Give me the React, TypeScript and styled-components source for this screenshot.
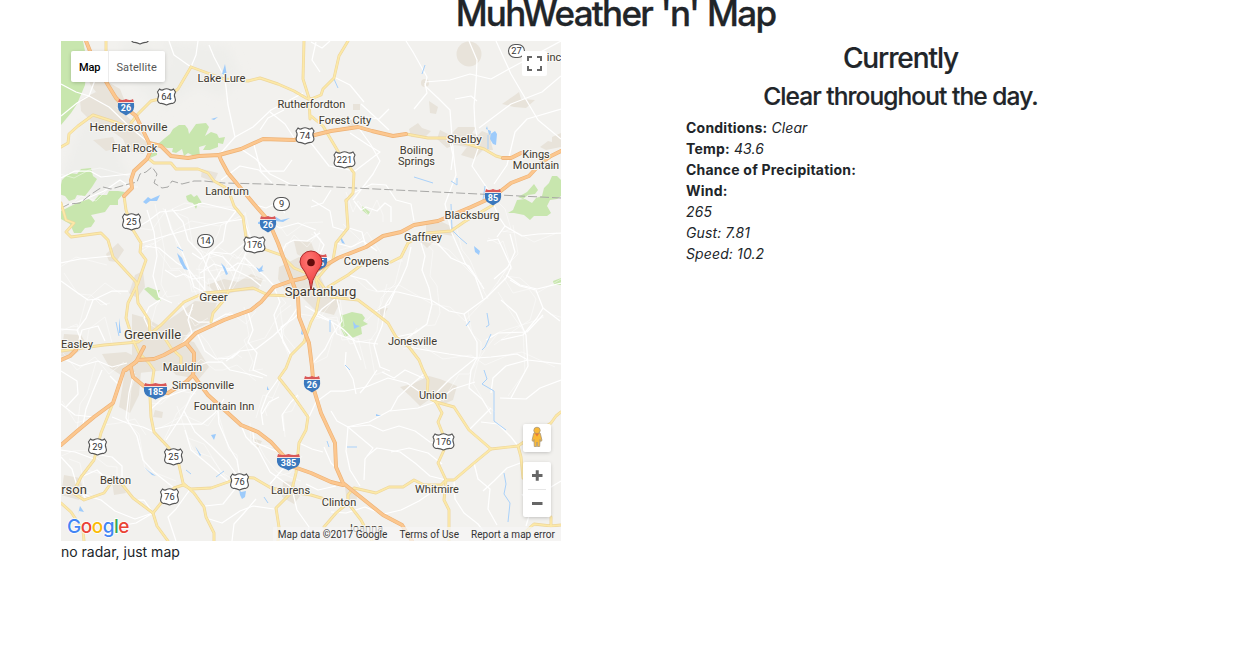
import React from "react";
import styled, { createGlobalStyle } from "styled-components";

const GlobalStyle = createGlobalStyle`
  html { font-size: 14px; }
  *, *::before, *::after { box-sizing: border-box; }
  body {
    margin: 0;
    overflow: hidden;
    background: #fff;
    color: #212529;
    font-family: Inter, "Liberation Sans", sans-serif;
    font-size: 1rem;
    line-height: 1.5;
  }
`;

const Page = styled.main`
  width: 1245px;
  height: 663px;
  overflow: hidden;
`;

const Title = styled.h1`
  margin: -8px 0 7px;
  padding-right: 14px;
  font-size: 35px;
  font-weight: 500;
  line-height: 42px;
  letter-spacing: -1.7px;
  word-spacing: 1px;
  text-align: center;
  white-space: nowrap;
  -webkit-text-stroke: 0.3px #212529;
`;

const Columns = styled.div`
  display: grid;
  grid-template-columns: 500px 429px;
  column-gap: 125px;
  padding-left: 61px;
`;

const MapFrame = styled.div`
  position: relative;
  width: 500px;
  height: 500px;
  overflow: hidden;
  font-family: Roboto, sans-serif;
`;

const MapArt = styled.svg`
  display: block;
  width: 500px;
  height: 500px;
  font-family: Roboto, sans-serif;
`;

const Control = styled.div`
  position: absolute;
  display: flex;
  background: #fff;
  border-radius: 2px;
  box-shadow: 0 1px 4px -1px rgba(0, 0, 0, 0.3);
`;

const TypeControl = styled(Control)`
  top: 10px;
  left: 10px;
  width: 94px;
  height: 31px;
`;

const TypeButton = styled.button<{ $active?: boolean }>`
  padding: 2px 8px 0;
  border: 0;
  border-left: ${(p) => (p.$active ? "0" : "1px solid #ececec")};
  background: transparent;
  color: ${(p) => (p.$active ? "#000" : "#565656")};
  font: ${(p) => (p.$active ? 500 : 400)} 11px Roboto, sans-serif;
  letter-spacing: ${(p) => (p.$active ? "-0.1px" : "0.12px")};

  & + & { padding: 2px 7px 0; }
`;

const FullscreenControl = styled(Control)`
  top: 10px;
  right: 14px;
  width: 25px;
  height: 25px;
  box-shadow: none;
`;

const PegmanControl = styled(Control)`
  top: 383px;
  right: 10px;
  width: 28px;
  height: 28px;
`;

const ZoomControl = styled(Control)`
  top: 421px;
  right: 10px;
  width: 28px;
  height: 55px;
`;

const MapFooter = styled.div`
  position: absolute;
  right: 0;
  bottom: 0;
  display: flex;
  gap: 12px;
  height: 14px;
  padding: 0 6px 0 5px;
  background: rgba(245, 245, 245, 0.72);
  color: #333;
  font-size: 10px;
  line-height: 15px;
  white-space: nowrap;
`;

const FooterItem = styled.span`
  letter-spacing: 0.03px;
`;

const Caption = styled.p`
  margin: 0;
`;

const Weather = styled.section`
  min-width: 0;
`;

const Heading = styled.h2<{ $small?: boolean }>`
  margin: 0 0 ${(p) => (p.$small ? "6px" : "7px")};
  font-size: ${(p) => (p.$small ? "24.5px" : "28px")};
  line-height: ${(p) => (p.$small ? "29px" : "34px")};
  font-weight: 500;
  letter-spacing: ${(p) => (p.$small ? "-0.93px" : "-1.1px")};
  text-align: center;
  white-space: nowrap;
  -webkit-text-stroke: 0.2px #212529;
`;

const Reading = styled.div`
  height: 21px;
  line-height: 21px;
  white-space: nowrap;
`;

const Name = styled.strong`
  font-weight: 700;
  letter-spacing: 0.22px;
`;

const Value = styled.em`
  letter-spacing: 0.12px;
`;

const highways = [
  "86,41 92,56 108,85 116,98 126,108 136,116 149,143 161,146 171,156 188,158 199,156 219,155 221,160 228,173 254,204 268,220 278,243 291,278 298,297 299,317 309,343 312,367 314,390 321,413 335,443 336,467 343,483 383,515 402,525 412,541",
  "149,143 151,150 147,159 134,171 131,180 132,188 124,196",
  "219,155 241,149 263,139 294,140 331,131 358,127 372,131 393,136 406,134",
  "561,151 551,156 541,163 529,176 511,183 493,197 471,207 438,221 414,225 401,232 383,236 366,247 338,258 326,265 304,278 291,281 274,287 261,302 251,310 224,320 196,333 186,343 164,355 154,359 138,360 126,370",
  "144,347 136,362 124,370 113,403 94,417 76,432 61,445",
  "186,343 194,353 194,367 193,375 208,395 241,425 258,432 271,442 281,453 294,467 311,473 331,482 343,485",
  "131,368 133,377 151,392 168,393 186,382 193,375",
  "61,360 70,356 76,350",
  "503,158 511,158 521,153",
];

const roads = [
  "191,67 178,89 168,97 151,101 138,114 131,123",
  "191,67 224,79 248,81 260,78 278,84 294,91 306,98 311,99",
  "304,41 303,79 309,98 310,119",
  "348,41 339,56 334,78 323,89 321,95 311,99",
  "61,147 68,143 69,134 78,126 93,115 118,123 132,128",
  "106,41 106,80",
  "149,159 154,163 171,163 176,169 198,169 208,173 214,181 228,189 234,206 243,217 246,237 261,248 281,255 294,268 311,275",
  "124,196 126,210 133,230 141,243 140,252 146,260 138,283 128,303 126,318 133,340 139,353 149,363 154,370 150,397 151,417 154,432 169,448 179,465 183,483 194,493 204,507 206,517 214,533 214,541",
  "61,203 66,220 74,223 66,232 71,237 101,233 108,240 113,257 136,282 138,303 149,320 150,333",
  "61,351 82,348 104,345 138,342 151,333 161,325 184,302 204,293 228,291 253,288 268,295 294,296",
  "228,292 224,300 213,313 211,322",
  "164,337 171,348 181,357 181,368",
  "113,403 101,433 94,460 81,477 73,493 84,500 104,493 111,483 121,483 133,498 153,513 157,526 168,541",
  "61,503 71,512 83,530 84,541",
  "153,513 161,503 174,488 183,485 191,489 211,488 228,482 239,477 254,478 271,488 291,492 311,495 328,500 336,504",
  "304,342 291,355 286,368 279,378 294,397 308,417 306,430 299,443 296,473 291,493 276,508 279,527 278,541",
  "346,200 348,228 336,243 333,260 316,280 320,292 316,313 311,322 304,342",
  "311,116 323,126 339,153 354,173 353,193 346,201",
  "406,134 428,138 446,138 468,144 484,149 496,156 503,158",
  "493,205 464,222 451,231 426,233 408,243 401,257 391,262 364,263 348,275 328,287",
  "316,277 331,297 358,300 374,312 388,323 396,337 409,347 419,360 423,370 428,380 427,397 436,402 454,407 469,430 491,449 518,446 551,423 556,416 561,412",
  "436,402 442,413 438,422 444,437 444,450 438,463 446,480 444,500 449,510 449,541",
  "491,449 474,463 454,480 446,480 441,485 424,485 414,480 403,487 389,487 376,493 354,488 348,495 348,503 336,513 324,527",
  "348,503 361,520 372,541",
  "518,446 521,457 523,478",
  "551,517 551,526 534,524 524,533",
  "551,526 561,525",
];

const lanes = [
  "169,41 174,55 191,67", "198,41 196,55 191,67", "61,116 77,103 89,96 109,107 131,128 149,143",
  "61,84 76,92 89,96 95,80", "209,45 214,57 225,78 228,105 235,137 219,155", "235,137 253,127 271,110 303,93",
  "241,149 256,159 270,174 290,184 315,188", "254,145 261,171 284,171 292,160", "221,180 240,166 259,170 272,183",
  "270,112 285,124 294,138", "260,130 268,118 284,110", "311,143 329,166 355,171 380,152 368,145 350,133",
  "406,41 413,52 427,77 425,86 438,98 450,110 452,137 454,159 456,175 445,204 451,230",
  "469,41 477,60 476,82 474,106 475,126 479,146 472,166 485,185 493,197", "425,82 450,80 470,74 491,79 509,69 561,41",
  "449,137 453,155 451,170", "496,41 511,74 538,120 561,139", "561,76 542,92 511,104 479,128", "455,99 471,96 477,101",
  "494,184 507,165 515,132 527,119 561,109", "358,127 371,145 380,161 373,174 353,200",
  "353,193 372,184 386,185 396,200 411,204 414,221", "311,207 323,203 331,190", "312,200 330,211 333,227 346,231",
  "354,201 361,210 366,207 377,211 385,203 391,207 391,222", "61,178 75,171 90,171 101,177 130,174",
  "61,206 75,203 90,197 104,191 120,180 132,188", "61,263 80,259 111,256", "61,281 75,291 88,300 98,299 107,305",
  "77,330 86,318 93,300 112,291 128,291", "61,329 77,330 83,345", "79,340 82,330 98,326 105,341", "66,360 80,366 98,361 112,367 127,363",
  "133,230 148,221 160,212 181,210 202,203 236,211", "145,246 159,248 177,263 189,270 205,290", "141,243 165,236 190,229 218,223 244,219",
  "147,210 154,232 157,256 153,276 159,297 172,303", "165,209 171,229 181,249 187,264 194,287 206,293",
  "172,209 183,222 188,240 201,254 209,271 221,290", "236,211 226,224 223,241 210,253 204,270 205,293", "243,217 251,240 244,257 236,271 229,290",
  "244,257 254,267 265,276 274,286", "210,253 223,257 235,270 251,278 261,286", "192,253 201,259 211,252 231,254 245,243",
  "200,273 214,264 229,269 238,263 254,266", "165,270 176,277 184,274 193,279 205,277", "219,291 215,281 221,270 235,270",
  "281,255 286,244 294,240 307,241 320,233", "267,221 280,228 298,223 316,230", "314,232 324,245 319,256 333,260",
  "336,243 351,247 363,241 377,251", "366,247 362,232 349,228", "348,275 366,280 377,291 398,292 431,300 449,311 464,314 486,298 506,278 511,267 502,247 498,239 487,241",
  "421,243 425,256 422,270 429,288 432,304 427,324 415,333 396,337", "426,233 439,245 451,258 469,266 484,289", "451,231 457,245 465,263 475,276 483,299",
  "411,247 407,266 400,282 386,304 382,326 374,345 380,367 390,371", "401,257 386,265 371,263", "374,312 389,304 395,291", "393,341 407,338 418,330",
  "493,203 499,217 505,226 497,237", "505,226 522,236 538,234 561,233", "510,234 515,252 508,267 494,279",
  "510,280 520,286 536,290 543,308 537,318 523,335 501,340", "506,275 520,285 537,289 561,283", "543,308 560,321", "501,300 516,313 526,335 528,366 511,398",
  "464,314 468,326 477,342 477,358 471,370 469,388 482,399 491,414", "409,347 425,350 449,354 477,358 491,357 517,354 528,360 561,364",
  "486,340 498,333 527,332 543,315", "477,357 461,370 451,378 435,394", "311,322 322,309 335,299", "317,316 332,322 337,334 353,340 361,360",
  "305,306 324,317 343,329 355,341 378,344", "337,299 342,321 332,335 325,349 313,363", "299,306 287,323 273,336 256,349 240,351 226,361",
  "291,355 283,342 281,327 293,319 299,313", "274,287 280,302 274,315 278,331 291,355", "248,312 253,330 248,342 257,353 253,370 267,376",
  "198,335 205,351 216,359 232,358 239,352", "194,367 208,362 222,362 230,370 244,373 263,378", "181,345 192,333 188,320 193,304", "151,333 144,318 149,307 160,300",
  "181,302 187,315 198,322 211,322", "212,322 226,314 242,315 252,310", "102,370 93,391 86,409 83,425", "61,404 75,415 94,417",
  "61,457 72,469 77,486 86,499", "61,450 75,452 94,459", "81,477 97,470 111,483", "94,454 112,457 122,466 122,483",
  "134,372 129,393 126,418 137,436 143,460 154,472 174,488", "112,417 127,423 143,427 154,432", "151,409 162,399 177,393 197,386",
  "154,429 178,424 202,424 215,413 224,399", "166,440 181,417 191,397 199,386", "185,430 191,450 208,464 229,482",
  "184,411 195,432 211,446 228,463 239,478", "217,401 219,424 229,447 237,460 240,477", "241,425 246,437 258,449 270,472 294,489",
  "253,432 254,442 281,453", "279,378 267,395 261,411 263,425", "279,397 269,402 262,414", "284,431 282,415 291,402 298,395",
  "270,484 282,470 294,461", "205,506 223,504 239,484", "191,488 176,509 168,517 176,541", "153,513 144,500 135,500",
  "153,513 135,519 115,511 101,500 75,492", "153,513 136,523 119,526 106,535", "206,518 222,523 240,511 253,506 274,509",
  "293,493 297,510 309,527 306,541", "232,541 234,524 244,513 256,499", "309,417 316,402 331,391 345,391 366,387 388,378 407,383 423,394",
  "356,394 353,379 345,365 346,352", "347,427 369,422 391,410 398,397 411,385 424,374", "331,411 337,421 348,427 370,425 383,431 399,426 415,431 430,442 442,445",
  "348,427 346,451 350,470 360,486", "348,427 373,448 365,459 364,480", "390,411 418,408 441,400", "391,452 409,448 428,453 442,464",
  "446,480 430,476 415,463 400,452 377,448 367,456", "454,480 455,499 464,513 478,524 491,541", "474,463 478,479 490,489 488,509 497,525",
  "441,486 419,501 401,510 384,514", "331,512 346,513 365,507 382,514", "336,486 318,490 306,484", "324,447 331,463 336,468", "299,443 312,449 323,452",
  "469,430 484,415 491,408", "481,422 498,424 511,437 518,446", "523,462 507,468 494,481 483,491", "436,402 453,389 475,382", "491,393 493,378 506,366 528,360",
  "561,380 540,388 526,399 500,398", "561,481 551,487 542,499", "522,494 531,509 526,526", "423,378 405,370 394,378 382,372", "377,370 366,386 360,393",
  "316,42 312,60 320,72", "334,77 350,85 364,102", "361,104 374,116 389,130", "414,109 427,93 425,83", "389,109 379,119 365,117 345,119",
  "61,371 77,381 78,394 66,407", "110,376 119,385 114,403", "285,213 277,203 266,208 256,205", "311,42 322,48 330,41",
];

const fineLanes = lanes.slice(24, 105).map((line, i) =>
  line
    .split(" ")
    .map((point, k) => {
      const [x, y] = point.split(",").map(Number);
      return `${x + ((i * 7) % 17) - 8},${y + ((k * 11 + i * 5) % 19) - 9}`;
    })
    .join(" "),
);

const terrain = [
  "M120 41h26l20 28-11 29-19-11z",
  "M158 41l70 6 14 31-22 20-23-12-29 21-22-9 24-36z",
  "M83 118l24 8 23 54-34 15-35-16z",
];

const urban = [
  "M77 61l24 1 7 20 12 7 6 15-8 4-16-8-12-16-5-18z", "M80 100l16-8 16 12 19 16 18 24-6 10-15-3-5-12-14-10-14-4-14-14z",
  "M93 140l20-3 4 11-11 3zM202 169l16 4-4 9-13-5z", "M106 254l12-11 6 7-8 12-7-1zM135 275l8-4 2 16-8 11-8-5z",
  "M132 314l14 4 14 8 19-13 16-12 22 2-8 20-20 9-15 20-8 18-27 3-7-17z", "M207 285l17-6 14 3 13-8 12 5-5 11-23 2-15 4z",
  "M102 354l24-2 16 8-3 35-9 18-11-6 5-30-14-9z", "M152 352l24-14 18 4 15 25-10 12-23-4-11-12z", "M64 334l17 1 6 10-17 13-9-2z",
  "M294 241l17 1 5 13-6 7-13-8zM279 267l20-10 18 12 9 20 14 13-6 13-19-5-14-14-15-5-8-12z",
  "M437 139l3-9 10 5 8-8 18 0-4 6 6 2 4-4 12 5-3 6 2 8-10 0-9 9-13-4 6-8-12-2-8 3z", "M409 129l9-6 4 5 9 3-7 7-13-1z",
  "M426 221l8 3 8-2 13 6-2 8-11-2-15 14-8-8 7-6z",
  "M400 387l12-3 17-8 11 3 17 7-4 14-9 4-14-5-10 7-10-10z", "M353 104h7v6h-7zM345 120l11 0 1 5-8 2zM429 101l9 6-2 7-6-1z",
  "M502 104l13-9 4-3 2 7 14 1-9 8-12-1zM540 147l8-6 4 1v-5l9-4v14l-15 3z", "M283 481l10 1 7 14-6 8-12-7zM345 487l11 1 1 11-10 5z",
  "M64 475l16 3 4 14-5 8-18-5zM111 475l11 7 4 11-12 2zM252 438l10 3-4 7zM155 410l8 2-1 6-9-1z", "M376 309l12-1-5 9z",
];

const parks = [
  "M61 41h22l4 20-2 24-8 19-6 9-10 12z",
  "M158 144l7-6 5-4 3-5 6-4 6 0 3 4 1 5 7-10 10-1 3 4-4 9 6-4 6 2 2 4 6-1-2 7-5-1 0 4-8 3-7 0 3-5-7 2 1 9-5 3-3-4-4-2-4 3-2-7-6 4-4-1 1-4-6 0z",
  "M149 151l8 1 0 3-7 3z",
  "M62 180l7-7 8 1 4-5 10-1 2 8 4 3-5 8-7 9-8-1-2 4-6 2-4-5-6-2z", "M61 211l16-8 12-4 4 3 6-7 8 0 2-4 9 0 7 1-7 8 0 5-8 0-5 7-14 3 4 6-4 6-6 1-4 5-7 0-4-9-9-5-6 3z",
  "M186 196l5-2 3 3 3-2 5 8-4 0-2 6-3-6-4-1-2-2zM144 289l4-2 8 3 4 0-2 4 3 7-5-1z", "M340 314l3 1 9-3 10 2 3 4-2 3 5 3-7 3 1 7-10 4-3-3-4 2-4-8z",
  "M508 213l5-3 4-10 8-1 7 4 4-5 6-2 2-8 5-5 3-7 5 0 4 4v16l-4 3-7 1-3 6 4 7-4 3-13 0-4 4-6-5-10-2z", "M553 281l8-3v7h-7zM362 206l8 6-2 3-6-5z", "M534 184l4 6-3 4-7 1-5 4-5-2 9-5z",
];

const waters = [
  "M487 126l2 9 6-4 2 3-1 11-3-1-3-5 1-8-5-2z", "M145 200l3-3 3 2 9-4-3 6-7 0-4 3-3-2z", "M177 253l5 5 3 7 3 5-4-1-4-7z",
  "M221 263l4 4 3 7-2 1-2-5zM256 267l3 2 4-4-1 5 2 1-5 1z", "M258 222l9-2 9-3 5 3 9-2-7 4-8-1-4 3-13 0z",
  "M239 489l2 3 5-1-1 6-3 2-2-4z", "M80 506l4 6-5-1-1 3zM211 435l5-1-2 6z", "M144 467l6 5 6 4-4-1z",
  "M340 235l5 9-3-1-2-5zM353 321l3 4 4 1-6 3zM474 246l6 5-1 4-4-3zM225 64l2 12-5-2z",
  "M211 119l7-2-4 3zM195 446l6 9-1 1zM267 386l2 4-2 0zM376 414l5 2-5 0zM119 318l0 15 2 0z", "M302 328l1 7-2-1z",
];

const streams =
  "M451 204l1 26 8 8 7 6M457 178v7l-6-4M414 177l19 6M485 186l-2 14M488 135v14M425 65l-3 9M487 313l2 12-3 2M491 334l-6 13-3 3M466 326l4-5M484 370l3 9-5 5 12 7v30l12 9M504 473l2 11-2 10 6 9-2 19M347 447l10 0M183 251l-6-4M116 322l3 14M264 497l4 6M330 320v12M225 78l-7-2M484 535l3 4M327 441l2 6M186 470l5 4M224 471l-8 6M345 365l5 5M337 155l3 5M334 79l4 9";

const places: [string, number, number, number?][] = [
  ["Lake Lure", 221.5, 82, 11.2], ["Rutherfordton", 311.5, 108], ["Forest City", 345, 124], ["Shelby", 464.5, 142.5, 11.8], ["Boiling", 416.5, 154],
  ["Springs", 416.5, 165], ["Kings", 536, 158], ["Mountain", 536, 169], ["Hendersonville", 128.5, 131, 11.8], ["Flat Rock", 134.5, 152],
  ["Landrum", 227, 195], ["Blacksburg", 472, 219, 11.1], ["Gaffney", 423, 241], ["Cowpens", 366.5, 265], ["Spartanburg", 320.5, 296, 13],
  ["Greer", 213.5, 300.5, 11.8], ["Greenville", 152.5, 339, 13.1], ["Easley", 77, 348, 11.2], ["Mauldin", 182.5, 371], ["Simpsonville", 203, 389],
  ["Fountain Inn", 224, 410], ["Jonesville", 412.5, 345], ["Union", 433, 399], ["Whitmire", 437, 493], ["Clinton", 339, 506],
  ["Laurens", 290.5, 494], ["Belton", 115.5, 484], ["rson", 74, 494, 13], ["inc", 554, 61], ["Joanna", 365, 532],
];

const usRoutes: [string, number, number][] = [
  ["64", 166.5, 97], ["74", 305, 136], ["221", 344.5, 160], ["25", 131.5, 222], ["176", 254.5, 245], ["29", 97.5, 447], ["25", 173.5, 457], ["76", 169.5, 497], ["76", 239.5, 482], ["176", 443.5, 442], ["", 140, 36],
];

const interstates: [string, number, number][] = [
  ["26", 126, 107], ["26", 268, 224], ["85", 493, 197], ["85", 319, 262], ["26", 312, 384], ["185", 155.5, 391], ["385", 288.5, 462],
];

const stateRoutes: [string, number, number][] = [["27", 516.5, 51], ["9", 281.5, 204], ["14", 205.5, 241]];

function UsShield({ label, x, y }: { label: string; x: number; y: number }) {
  const w = label.length > 2 ? 10.5 : 9;
  return (
    <g transform={`translate(${x} ${y})`}>
      <path
        d={`M${-w + 2} -8 Q${-w / 2} -6 -3 -7.5 Q0 -9 3 -7.5 Q${w / 2} -6 ${w - 2} -8 L${w} -5 Q${w - 2} -2 ${w - 0.5} 1 Q${w + 1} 5 ${w - 3} 6.5 Q4 6 0 8 Q-4 6 ${-w + 3} 6.5 Q${-w - 1} 5 ${-w + 0.5} 1 Q${-w + 2} -2 ${-w} -5 Z`}
        fill="#fff" stroke="#555" strokeWidth="1.1"
      />
      <text y="3.3" textAnchor="middle" fontSize="9.3" fill="#333">{label}</text>
    </g>
  );
}

function Interstate({ label, x, y }: { label: string; x: number; y: number }) {
  const w = label.length > 2 ? 11.5 : 8;
  return (
    <g transform={`translate(${x} ${y})`}>
      <path d={`M${-w} -4 Q${-w - 1} 4 ${-w / 2} 6 Q-2 7 0 8.5 Q2 7 ${w / 2} 6 Q${w + 1} 4 ${w} -4Z`} fill="#3b78bd" />
      <path d={`M${-w + 1} -8 Q${-w / 2} -6 0 -8 Q${w / 2} -6 ${w - 1} -8 L${w} -4.5H${-w}Z`} fill="#d95858" />
      <path d={`M${-w} -4.5H${w}`} stroke="#fff" strokeWidth=".7" />
      <text y="3.8" textAnchor="middle" fontSize="9" fontWeight="700" fill="#fff">{label}</text>
    </g>
  );
}

function StateRoute({ label, x, y }: { label: string; x: number; y: number }) {
  return (
    <g transform={`translate(${x} ${y})`}>
      <rect x="-8" y="-6.5" width="16" height="13" rx="6.5" fill="#fff" stroke="#555" strokeWidth="1.1" />
      <text y="3.3" textAnchor="middle" fontSize="9.3" fill="#333">{label}</text>
    </g>
  );
}

function RegionMap() {
  return (
    <MapArt viewBox="61 41 500 500" role="img" aria-label="Map of Spartanburg">
      <defs>
        <radialGradient id="pin" cx=".4" cy=".25" r=".75">
          <stop stopColor="#ff7774" />
          <stop offset="1" stopColor="#ee3d3d" />
        </radialGradient>
        <filter id="relief"><feGaussianBlur stdDeviation="5" /></filter>
      </defs>
      <rect x="61" y="41" width="500" height="500" fill="#f2f1ee" />
      <g fill="#eeeeeb" filter="url(#relief)">{terrain.map((d) => <path key={d} d={d} />)}</g>
      <g fill="#e8e3da">{urban.map((d) => <path key={d} d={d} />)}<circle cx="469" cy="54" r="12.5" /><circle cx="425" cy="83" r="4" /></g>
      <g fill="#c8e6ae">{parks.map((d) => <path key={d} d={d} />)}</g>
      <g fill="none" stroke="#fff" strokeLinejoin="round">
        {fineLanes.map((p, i) => <polyline key={i} points={p} strokeWidth=".6" opacity=".75" />)}
        {lanes.map((p) => <polyline key={p} points={p} strokeWidth="1.25" />)}
      </g>
      <g fill="#9dcbfb">{waters.map((d) => <path key={d} d={d} />)}</g>
      <path d={streams} fill="none" stroke="#a9d1fa" strokeWidth="1" />
      <path d="M61 208l8-4 11-1 10-8 9-6 4-2 8 2 14-4 12-3 3-8 6-2 6-5 5 7-3 9 8 5 6-1 4-6 10 3 12-3 10 0 20 2 40 1 70 3 227 11" fill="none" stroke="#a8a8a6" strokeWidth="1" strokeDasharray="9 3" />
      <g fill="none" strokeLinejoin="round" strokeLinecap="round">
        {roads.map((p) => <polyline key={p} points={p} stroke="#eed69c" strokeWidth="2.9" />)}
        {roads.map((p) => <polyline key={p} points={p} stroke="#fce9a8" strokeWidth="1.7" />)}
        {highways.map((p) => <polyline key={p} points={p} stroke="#edb276" strokeWidth="3.9" />)}
        {highways.map((p) => <polyline key={p} points={p} stroke="#fcc78f" strokeWidth="2.6" />)}
      </g>
      {usRoutes.map(([label, x, y]) => <UsShield key={`${x}-${y}`} label={label} x={x} y={y} />)}
      {interstates.map(([label, x, y]) => <Interstate key={`${x}-${y}`} label={label} x={x} y={y} />)}
      {stateRoutes.map(([label, x, y]) => <StateRoute key={label} label={label} x={x} y={y} />)}
      <g fill="#40392f" stroke="#f8f7f4" strokeWidth="2.2" paintOrder="stroke" textAnchor="middle" strokeLinejoin="round">
        {places.map(([label, x, y, size = 11]) => <text key={label} x={x} y={y} fontSize={size}>{label}</text>)}
      </g>
      <path d="M311 290Q310.4 280 305 272Q300 266 300 262A11 11 0 1 1 322 262Q322 266 317 272Q311.6 280 311 290Z" fill="url(#pin)" stroke="#a82b2b" strokeWidth="1" />
      <circle cx="311" cy="262.5" r="3.8" fill="#630b0b" />
      <g fontSize="19" fontFamily="Inter, sans-serif" fontWeight="500" stroke="#fff" strokeWidth="1.4" paintOrder="stroke">
        <text x="67" y="533" textLength="62.5" lengthAdjust="spacing">
          <tspan fill="#4285f4">G</tspan><tspan fill="#ea4335">o</tspan><tspan fill="#fbbc05">o</tspan><tspan fill="#4285f4">g</tspan><tspan fill="#34a853">l</tspan><tspan fill="#ea4335">e</tspan>
        </text>
      </g>
    </MapArt>
  );
}

export default function App() {
  return (
    <Page>
      <GlobalStyle />
      <Title>MuhWeather 'n' Map</Title>
      <Columns>
        <section>
          <MapFrame>
            <RegionMap />
            <TypeControl><TypeButton $active>Map</TypeButton><TypeButton>Satellite</TypeButton></TypeControl>
            <FullscreenControl>
              <svg width="25" height="25" viewBox="0 0 25 25"><path d="M6 10V6H10M15 6H19V10M19 15V19H15M10 19H6V15" fill="none" stroke="#666" strokeWidth="2" /></svg>
            </FullscreenControl>
            <PegmanControl>
              <svg width="28" height="28" viewBox="0 0 28 28">
                <path d="M10.7 9.3Q14 8 17.3 9.3L19 16.5 17.6 17.5 17 15.5 16.7 22.5H14.4L14 18 13.6 22.5H11.3L11 15.5 10.4 17.5 9 16.5Z" fill="#f9b936" stroke="#a8977a" strokeWidth=".8" />
                <circle cx="14" cy="6.4" r="3.2" fill="#f9b936" stroke="#a8977a" strokeWidth=".8" />
                <path d="M11.8 9.6l2.2 2.8 2.2-2.8" fill="#e87932" />
              </svg>
            </PegmanControl>
            <ZoomControl>
              <svg width="28" height="55" viewBox="0 0 28 55"><path d="M5 27.5H23" stroke="#e6e6e6" /><path d="M9 13.5H19.5M14.25 8.25V18.75M9 41.5H19.5" stroke="#666" strokeWidth="3" /></svg>
            </ZoomControl>
            <MapFooter>
              <FooterItem>Map data ©2017 Google</FooterItem>
              <FooterItem>Terms of Use</FooterItem>
              <FooterItem>Report a map error</FooterItem>
            </MapFooter>
          </MapFrame>
          <Caption>no radar, just map</Caption>
        </section>
        <Weather>
          <Heading>Currently</Heading>
          <Heading $small as="h3">Clear throughout the day.</Heading>
          <Reading><Name>Conditions:</Name> <Value>Clear</Value></Reading>
          <Reading><Name>Temp:</Name> <Value>43.6</Value></Reading>
          <Reading><Name>Chance of Precipitation:</Name></Reading>
          <Reading><Name>Wind:</Name></Reading>
          <Reading><Value>265</Value></Reading>
          <Reading><Value>Gust: 7.81</Value></Reading>
          <Reading><Value>Speed: 10.2</Value></Reading>
        </Weather>
      </Columns>
    </Page>
  );
}
